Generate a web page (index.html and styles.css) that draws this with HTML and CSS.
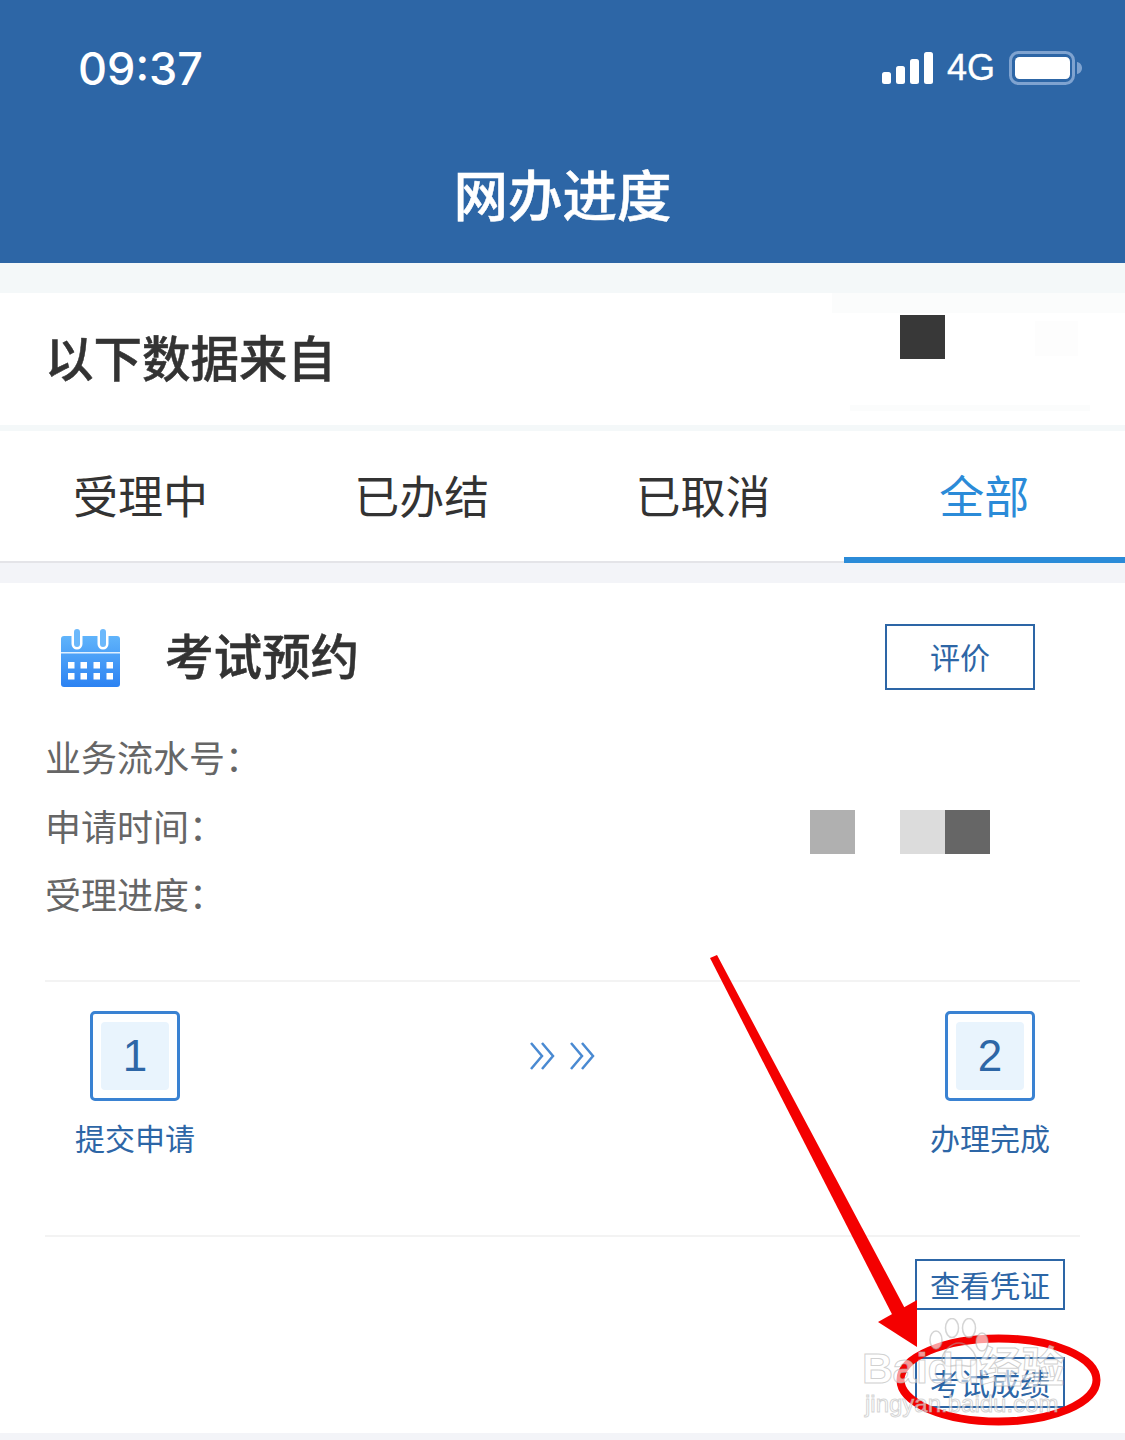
FILE: index.html
```html
<!DOCTYPE html>
<html lang="zh-CN">
<head>
<meta charset="utf-8">
<title>网办进度</title>
<link rel="stylesheet" href="styles.css">
</head>
<body>
<div class="page">
  <header class="header">
    <div class="status">
      <span class="time">09:37</span>
      <div class="status-right">
        <svg class="signal" width="51" height="32" viewBox="0 0 51 32"><rect x="0" y="20" width="9" height="12" rx="2.5"/><rect x="14" y="14" width="9" height="18" rx="2.5"/><rect x="28" y="7" width="9" height="25" rx="2.5"/><rect x="42" y="0" width="9" height="32" rx="2.5"/></svg>
        <span class="net">4G</span>
        <svg class="battery" width="73" height="34" viewBox="0 0 73 34"><rect x="1.5" y="1.5" width="63" height="31" rx="8" fill="none" stroke="#7fa3d0" stroke-width="3"/><rect x="6" y="6" width="55" height="22" rx="4.5" fill="#fff"/><path d="M68 11c3 .5 5 3 5 6s-2 5.500-5 6z" fill="#7fa3d0"/></svg>
      </div>
    </div>
    <h1 class="title">网办进度</h1>
  </header>

  <section class="source">
    <span class="source-label">以下数据来自</span>
    <i class="block block-dark"></i>
    <i class="smudge smudge-top"></i>
    <i class="smudge smudge-square"></i>
    <i class="smudge smudge-bottom"></i>
  </section>

  <nav class="tabs">
    <span class="tab">受理中</span>
    <span class="tab">已办结</span>
    <span class="tab">已取消</span>
    <span class="tab tab-active">全部</span>
  </nav>

  <div class="lower">
    <main class="card">
      <div class="card-head">
        <svg class="cal" width="59" height="59" viewBox="0 0 59 59">
          <defs><linearGradient id="calg" x1="0" y1="0" x2="0" y2="1"><stop offset="0" stop-color="#60b4fb"/><stop offset="1" stop-color="#2c82f2"/></linearGradient></defs>
          <path d="M3 8h53a3 3 0 0 1 3 3v45a3 3 0 0 1-3 3H3a3 3 0 0 1-3-3V11a3 3 0 0 1 3-3z" fill="url(#calg)"/>
          <rect x="0" y="24" width="59" height="1.500" fill="#dff0ff"/>
          <g fill="none" stroke-linecap="round">
            <path d="M16 4v12M42 4v12" stroke="#fff" stroke-width="11"/>
            <path d="M16 4v12M42 4v12" stroke="#6bb8fb" stroke-width="6"/>
          </g>
          <g fill="#fff">
            <rect x="7" y="34" width="6.500" height="6.500"/><rect x="19.500" y="34" width="6.500" height="6.500"/><rect x="32.500" y="34" width="6.500" height="6.500"/><rect x="45.500" y="34" width="6.500" height="6.500"/>
            <rect x="7" y="45" width="6.500" height="6.500"/><rect x="19.500" y="45" width="6.500" height="6.500"/><rect x="32.500" y="45" width="6.500" height="6.500"/><rect x="45.500" y="45" width="6.500" height="6.500"/>
          </g>
        </svg>
        <h2 class="card-title">考试预约</h2>
        <span class="btn btn-rate">评价</span>
      </div>

      <div class="info">
        <div class="info-row">业务流水号：</div>
        <div class="info-row">申请时间：
          <span class="blocks">
            <i class="block block-mid"></i>
            <span class="pair"><i class="block block-light"></i><i class="block block-grey"></i></span>
          </span>
        </div>
        <div class="info-row">受理进度：</div>
      </div>

      <div class="steps">
        <div class="step">
          <div class="step-box"><span class="step-num">1</span></div>
          <span class="step-label">提交申请</span>
        </div>
        <svg class="chev" width="67" height="28" viewBox="0 0 67 28" fill="none" stroke="#4a8ad2" stroke-width="2.500">
          <path d="M2 1l11 13L2 27M13 1l11 13-11 13M42 1l11 13-11 13M53 1l11 13-11 13"/>
        </svg>
        <div class="step">
          <div class="step-box"><span class="step-num">2</span></div>
          <span class="step-label">办理完成</span>
        </div>
      </div>

      <div class="actions">
        <span class="btn btn-action">查看凭证</span>
        <span class="btn btn-action">考试成绩</span>
      </div>
    </main>
  </div>

  <svg class="annot" width="1125" height="1440" viewBox="0 0 1125 1440">
    <path d="M710 958L717 955 910 1318 898 1326z" fill="#f40000"/>
    <path d="M917 1300L878 1322 917 1347z" fill="#f40000"/>
    <ellipse cx="998.500" cy="1380" rx="98" ry="41.500" fill="none" stroke="#f40000" stroke-width="8"/>
  </svg>

  <div class="mark">
    <svg class="paw" width="62" height="50" viewBox="0 0 62 50" fill="rgba(255,255,255,.62)" stroke="rgba(170,170,170,.5)" stroke-width="1.500">
      <ellipse cx="8" cy="22" rx="6" ry="9"/><ellipse cx="24" cy="10" rx="6.500" ry="9.500"/><ellipse cx="41" cy="10" rx="6.500" ry="9.500"/><ellipse cx="54" cy="24" rx="6" ry="9"/>
      <path d="M31 25c-8 0-17 9-17 17 0 5 5 7 9 6 5-1 11-1 16 0 4 1 9-1 9-6 0-8-9-17-17-17z" fill="none"/>
    </svg>
    <span class="mark-main">Baidu经验</span>
    <span class="mark-sub">jingyan.baidu.com</span>
  </div>
</div>
</body>
</html>
```
FILE: styles.css
```css
* { box-sizing: border-box; }
html, body { margin: 0; padding: 0; }
body {
  background: #f4f8f9;
  font-family: "Noto Sans CJK SC", "Liberation Sans", sans-serif;
}
.page {
  position: relative;
  width: 1125px;
  height: 1440px;
  overflow: hidden;
  background: #f4f8f9;
}

/* header */
.header {
  height: 263px;
  background: #2d66a6;
  color: #fff;
}
.status {
  height: 136px;
  padding: 2px 43px 0 78px;
  display: flex;
  align-items: center;
  justify-content: space-between;
}
.time {
  font-family: Inter, "Liberation Sans", sans-serif;
  font-size: 45px;
  font-weight: 500;
  line-height: 50px;
}
.status-right {
  display: flex;
  align-items: center;
  margin-top: -2px;
}
.signal { fill: #fff; }
.net {
  margin-left: 14px;
  font-family: "Liberation Sans", sans-serif;
  font-size: 36px;
  line-height: 40px;
  -webkit-text-stroke: .4px #fff;
}
.battery { margin-left: 14px; }
.title {
  margin: 0;
  text-align: center;
  font-size: 54.5px;
  font-weight: 500;
  line-height: 114px;
  -webkit-text-stroke: .5px #fff;
}

/* source */
.source {
  position: relative;
  margin-top: 30px;
  height: 132px;
  padding: 0 180px 0 45px;
  background: #fff;
  display: flex;
  align-items: center;
  justify-content: space-between;
}
.source-label {
  margin-bottom: 6px;
  font-size: 48.5px;
  font-weight: 500;
  line-height: 60px;
  color: #333;
  -webkit-text-stroke: .5px #333;
}
.block { display: block; width: 45px; height: 44px; }
.source .block { margin-bottom: 44px; }
.block-dark { background: #383838; }
.block-mid { background: #b0b0b0; }
.block-light { background: #dcdcdc; }
.block-grey { background: #666; }
.smudge { position: absolute; background: #fbfcfc; }
.smudge-top { left: 832px; top: 0; width: 293px; height: 20px; }
.smudge-square { left: 1035px; top: 28px; width: 43px; height: 35px; background: #fdfdfd; }
.smudge-bottom { left: 850px; top: 112px; width: 240px; height: 6px; }

/* tabs */
.tabs {
  margin-top: 6px;
  height: 132px;
  background: #fff;
  display: grid;
  grid-template-columns: repeat(4, 1fr);
  box-shadow: inset 0 -2px 0 #e4e4e8;
}
.tab {
  text-align: center;
  font-size: 45px;
  line-height: 128px;
  color: #333;
}
.tab-active {
  color: #2b8bd8;
  box-shadow: inset 0 -6px 0 #2b8bd8;
}

/* card */
.lower {
  padding-top: 20px;
  height: 877px;
  background: #f3f4f8;
}
.card {
  height: 850px;
  padding: 41px 45px 0 45px;
  background: #fff;
}
.card-head {
  height: 66px;
  display: flex;
  align-items: center;
}
.cal { margin-left: 16px; flex: none; }
.card-title {
  margin: 0 0 6px 45px;
  font-size: 48.5px;
  font-weight: 500;
  line-height: 60px;
  color: #333;
  -webkit-text-stroke: .5px #333;
}
.btn {
  display: flex;
  align-items: center;
  justify-content: center;
  border: 2px solid #2d66a6;
  color: #2d66a6;
  font-size: 30px;
}
.btn-rate {
  margin-left: auto;
  margin-right: 45px;
  width: 150px;
  height: 66px;
  padding-bottom: 3px;
}
.info { margin-top: 32px; }
.info-row {
  height: 68.5px;
  display: flex;
  align-items: center;
  font-size: 36px;
  color: #666;
}
.blocks {
  margin-left: auto;
  margin-right: 90px;
  margin-top: 14px;
  display: flex;
  gap: 45px;
}
.pair { display: flex; }

/* steps */
.steps {
  margin-top: 52px;
  height: 257px;
  padding: 29px 29px 0 29px;
  border-top: 2px solid #f3f3f3;
  border-bottom: 2px solid #f3f3f3;
  display: flex;
  justify-content: space-between;
  align-items: flex-start;
}
.step {
  width: 122px;
  display: flex;
  flex-direction: column;
  align-items: center;
}
.step-box {
  width: 90px;
  height: 90px;
  padding: 8px;
  border: 3px solid #3a82d2;
  border-radius: 5px;
  background: #fff;
}
.step-num {
  display: block;
  height: 100%;
  border-radius: 4px;
  background: #e9f4fd;
  color: #2d66a6;
  font-family: "Liberation Sans", sans-serif;
  font-size: 44px;
  line-height: 68px;
  text-align: center;
}
.step-label {
  margin-top: 16px;
  white-space: nowrap;
  font-size: 30px;
  line-height: 40px;
  color: #2d66a6;
}
.chev { margin-top: 31px; }

/* actions */
.actions {
  padding: 22px 15px 0 0;
  display: flex;
  flex-direction: column;
  align-items: flex-end;
  gap: 47px;
}
.btn-action {
  width: 150px;
  height: 51px;
}

/* overlays */
.annot {
  position: absolute;
  left: 0;
  top: 0;
  pointer-events: none;
}
.mark {
  position: absolute;
  left: 862px;
  top: 1318px;
  width: 210px;
  height: 100px;
  pointer-events: none;
}
.paw {
  position: absolute;
  left: 66px;
  top: 0;
}
.mark-main {
  position: absolute;
  left: 0;
  top: 24px;
  white-space: nowrap;
  font-family: "Liberation Sans", "Noto Sans CJK SC", sans-serif;
  font-size: 43px;
  font-weight: 700;
  line-height: 52px;
  letter-spacing: -.5px;
  color: rgba(255, 255, 255, .6);
  -webkit-text-stroke: 1px rgba(170, 170, 170, .55);
}
.mark-sub {
  position: absolute;
  left: 3px;
  top: 71px;
  white-space: nowrap;
  font-family: "Liberation Sans", sans-serif;
  font-size: 24px;
  line-height: 30px;
  color: rgba(255, 255, 255, .6);
  -webkit-text-stroke: 1px rgba(170, 170, 170, .5);
}
```
